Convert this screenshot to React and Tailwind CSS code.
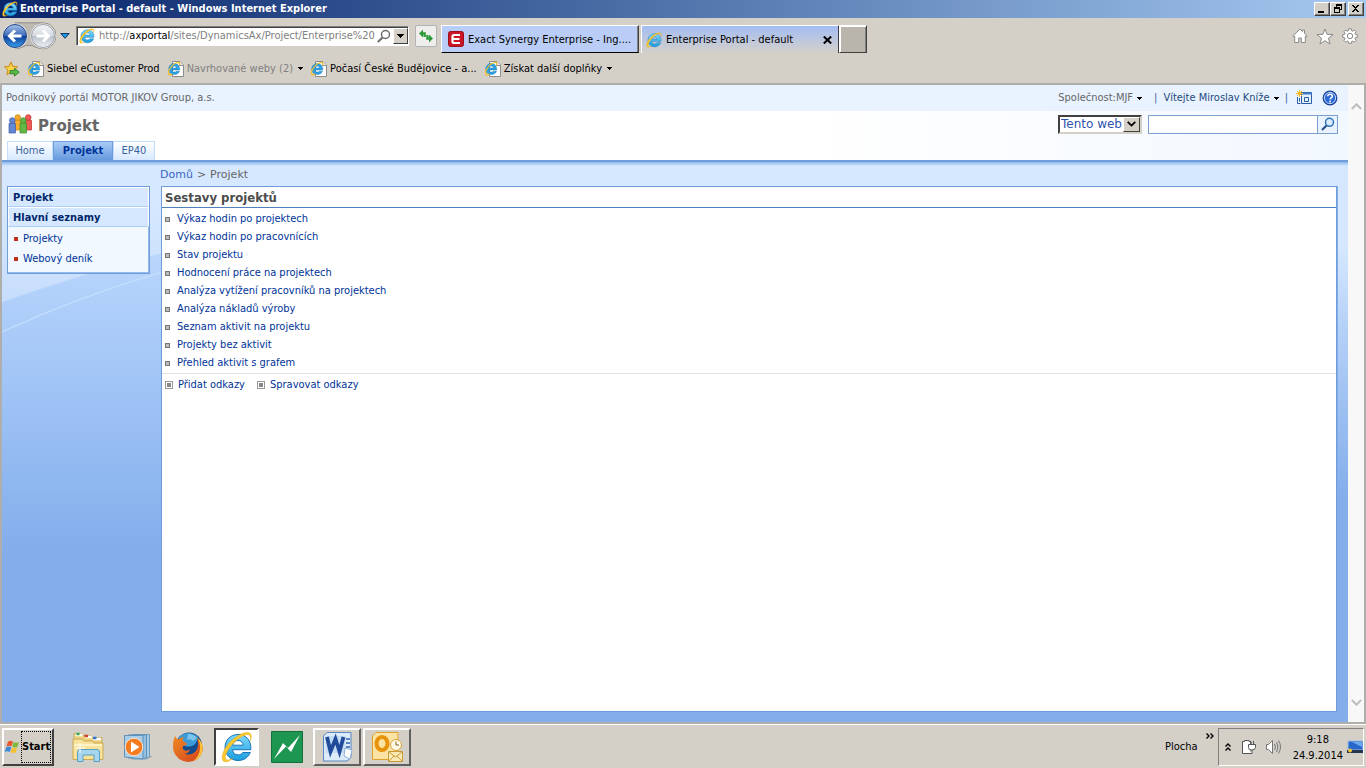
import { useState } from 'react'

const reports = [
  'Výkaz hodin po projektech',
  'Výkaz hodin po pracovnících',
  'Stav projektu',
  'Hodnocení práce na projektech',
  'Analýza vytížení pracovníků na projektech',
  'Analýza nákladů výroby',
  'Seznam aktivit na projektu',
  'Projekty bez aktivit',
  'Přehled aktivit s grafem'
]

const favorites = [
  { name: 'Siebel eCustomer Prod' },
  { name: 'Navrhované weby (2)', muted: true, menu: true },
  { name: 'Počasí České Budějovice - a...' },
  { name: 'Získat další doplňky', menu: true }
]

function Caret({ className = '' }) {
  return (
    <svg viewBox="0 0 5 3" className={`h-[3px] w-[5px] shrink-0 ${className}`} shapeRendering="crispEdges" fill="currentColor">
      <path d="M0 0h5v1H4v1H3v1H2V2H1V1H0z" />
    </svg>
  )
}

function IeLogo({ className = 'size-4' }) {
  return (
    <svg viewBox="0 0 32 32" className={`shrink-0 ${className}`}>
      <defs>
        <linearGradient id="ieBlue" x1="0" y1="0" x2="0" y2="1">
          <stop offset="0" stopColor="#7fd8fb" />
          <stop offset="1" stopColor="#1c9de0" />
        </linearGradient>
      </defs>
      <path d="M17 3.500C9.500 3.500 4 9 4 16.300S9.500 29.500 17 29.500c5.800 0 10.400-3 12.300-8h-7.600c-1 1.600-2.500 2.400-4.600 2.400-3.200 0-5.300-2-5.500-5.200h18.200C30.600 10 25.500 3.500 17 3.500zm-5.400 10.700c.6-2.900 2.500-4.700 5.400-4.700s4.900 1.800 5.300 4.700z" fill="url(#ieBlue)" stroke="#1a76b8" strokeWidth="1" />
      <path d="M29.500 9.500C31.300 4.500 30 1.200 25.800 1.400 20 1.700 10.500 8 5.300 15.700 1 22 0 28.600 2.800 30.300c2.300 1.300 6-.5 8.900-2.600-3.400 1.400-6.200 1.800-7 .3C3.600 25.500 5.500 21 8.700 16.500 14 9.200 22.500 3.500 26.800 3.500c2.300 0 3 2.300 2.700 6z" fill="#fbc92a" stroke="#e2a516" strokeWidth=".5" />
    </svg>
  )
}

function IePage() {
  return (
    <svg viewBox="0 0 16 16" className="size-4 shrink-0">
      <path d="M4.500.5h7.500l3.500 3.500v11.500h-11z" fill="#fdfdfd" stroke="#8c8c8c" />
      <path d="M11.500.5v4h4" fill="#eee" stroke="#8c8c8c" />
      <path d="M6.300 2.500C3 2.500.7 4.900.7 8s2.300 5.500 5.600 5.500c2.500 0 4.400-1.200 5.200-3.300H8.200c-.4.600-1 .9-1.800.9-1.300 0-2.200-.8-2.300-2.100h7.600c.3-3.800-1.900-6.500-5.400-6.500zM4.200 7c.2-1.100 1-1.900 2.200-1.900s1.900.8 2 1.900z" fill="#2da1e0" stroke="#1673b5" strokeWidth=".4" />
      <path d="M11.600 4.200c.6-1.800 0-3-1.500-2.700C7.300 2 3.400 5 1.600 8.300.3 10.900.1 13.100 1.300 13.700c.8.300 2-.1 3-.7" fill="none" stroke="#f4be22" strokeWidth="1.200" />
    </svg>
  )
}

function TitleBar() {
  const btn = 'flex h-3.5 w-4 items-center justify-center border border-t-white border-l-white border-r-[#404040] border-b-[#404040] bg-[#d4d0c8] shadow-[inset_-1px_-1px_0_#808080]'
  return (
    <header className="flex h-[18px] shrink-0 items-center bg-linear-to-r from-[#0a246a] to-[#a6caf0] px-0.5 text-[11px] font-bold text-white">
      <IeLogo />
      <h1 className="ml-0.5 flex-1 whitespace-nowrap">Enterprise Portal - default - Windows Internet Explorer</h1>
      <div className="flex">
        <button aria-label="Minimize" className={btn}>
          <svg viewBox="0 0 10 10" className="size-2.5" shapeRendering="crispEdges"><path d="M1 7h6v2H1z" /></svg>
        </button>
        <button aria-label="Restore" className={btn}>
          <svg viewBox="0 0 10 10" className="size-2.5" shapeRendering="crispEdges"><path d="M3 0h6v6H7V5h1V2H4v1H3zM1 3h6v6H1zM2 5v3h4V5z" fillRule="evenodd" /></svg>
        </button>
        <button aria-label="Close" className={`ml-0.5 ${btn}`}>
          <svg viewBox="0 0 10 10" className="size-2.5" shapeRendering="crispEdges"><path d="M1 1h2v1h1v1h1V2h1V1h2v1H7v1H6v1H5v1h1v1h1v1h1v1H6V7H5V6H4v1H3v1H1V7h1V6h1V5h1V4H3V3H2V2H1z" /></svg>
        </button>
      </div>
    </header>
  )
}

function NavButtons() {
  return (
    <div className="flex items-center">
      <svg viewBox="0 0 56 28" className="h-7 w-14">
        <defs>
          <linearGradient id="back" x1="0" y1="0" x2="0" y2="1">
            <stop offset="0" stopColor="#a9c4ec" />
            <stop offset=".48" stopColor="#3c69b8" />
            <stop offset=".52" stopColor="#0f3f9a" />
            <stop offset="1" stopColor="#3aa0ee" />
          </linearGradient>
          <linearGradient id="forward" x1="0" y1="0" x2="0" y2="1">
            <stop offset="0" stopColor="#f4f6f8" />
            <stop offset=".5" stopColor="#d3d8df" />
            <stop offset=".52" stopColor="#b9c1cb" />
            <stop offset="1" stopColor="#eef2f6" />
          </linearGradient>
        </defs>
        <path d="M15 .8h28a13 13 0 0 1 0 26c-6 0-9-3.500-14-3.500s-8 3.500-14 3.500z" fill="#bdbab4" stroke="#8f8d89" />
        <circle cx="15" cy="14" r="12.500" fill="#e8eef8" />
        <circle cx="15" cy="14" r="11.500" fill="url(#back)" stroke="#27457f" />
        <circle cx="43" cy="14" r="12.500" fill="#f0f0f0" />
        <circle cx="43" cy="14" r="11.500" fill="url(#forward)" stroke="#9aa0a8" />
        <path d="M21.500 14H10m5-5.500L9.500 14l5.500 5.500" fill="none" stroke="#fff" strokeWidth="3" />
        <path d="M36.500 14H48m-5-5.500 5.500 5.500-5.500 5.500" fill="none" stroke="#fff" strokeWidth="3" />
      </svg>
      <button aria-label="Recent pages" className="ml-1">
        <svg viewBox="0 0 10 6" className="h-1.5 w-2.5"><path d="M.8.500h8.400L5 5.300z" fill="#2196e0" stroke="#12366b" /></svg>
      </button>
    </div>
  )
}

function BrowserBar() {
  return (
    <div className="flex h-9 shrink-0 items-center pr-2 text-[11px]">
      <NavButtons />
      <div className="ml-1.5 flex h-5 w-[333px] items-center border border-t-[#808080] border-l-[#808080] border-r-white border-b-white bg-white pl-0.5 shadow-[inset_1px_1px_0_#404040]">
        <IeLogo />
        <div className="ml-1 flex-1 pt-px whitespace-nowrap text-[#808080]">
          http://<span className="text-black">axportal</span>/sites/DynamicsAx/Project/Enterprise%20
        </div>
        <button aria-label="Search">
          <svg viewBox="0 0 14 14" className="size-3.5" fill="none" stroke="#6d6d6d"><circle cx="8.500" cy="5.500" r="4" strokeWidth="1.500" /><path d="M5.500 8.500.8 13" strokeWidth="2" /></svg>
        </button>
        <button aria-label="Address list" className="ml-0.5 flex h-4 w-[15px] items-center justify-center border border-t-white border-l-white border-r-[#404040] border-b-[#404040] bg-[#d4d0c8]">
          <svg viewBox="0 0 7 4" className="h-1 w-[7px]" shapeRendering="crispEdges"><path d="M0 0h7v1H6v1H5v1H4v1H3V3H2V2H1V1H0z" /></svg>
        </button>
      </div>
      <button aria-label="Refresh" className="ml-1.5 flex h-[22px] w-[22px] items-center justify-center rounded-xs border border-[#b4b4b4] bg-[#eeeeec]">
        <svg viewBox="0 0 16 16" className="size-4" fill="#2f9a3a">
          <path d="M1 5.500 5 1.500v2.700h2.800V9H5.500V6.800H5v2.700z" />
          <path d="M15 10.500l-4 4v-2.700H8.200V7h2.300v2.200h.5V6.500z" />
        </svg>
      </button>
      <nav className="mt-1.5 ml-1 flex h-7 items-stretch text-black">
        <button className="flex w-[198px] items-center border border-t-white border-l-white border-r-[#404040] border-b-black bg-[#b9cdf6] pl-1.5 shadow-[inset_-1px_0_0_#808080]">
          <svg viewBox="0 0 16 16" className="size-4 shrink-0"><rect x=".5" y=".5" width="15" height="15" rx="2" fill="#cb1526" stroke="#9d0d1c" /><path d="M12 4H6q-1.500 0-1.500 1.500v5Q4.500 12 6 12h6M5 8h6.500" fill="none" stroke="#fff" strokeWidth="2.200" /></svg>
          <span className="ml-1 pt-0.5 whitespace-nowrap">Exact Synergy Enterprise - Ing....</span>
        </button>
        <button className="ml-0.5 flex w-[198px] items-center border-t border-r border-l border-t-white border-l-white border-r-[#404040] bg-linear-to-b from-[#a4bdf3] to-[#d4d0c8] pr-1.5 pl-1">
          <IeLogo />
          <span className="ml-1 flex-1 pt-0.5 text-left whitespace-nowrap">Enterprise Portal - default</span>
          <svg viewBox="0 0 9 8" className="h-2 w-[9px]" fill="none" stroke="#000" strokeWidth="2"><path d="m.8.500 7.400 7M8.200.5l-7.400 7" /></svg>
        </button>
        <button aria-label="New tab" className="w-[28px] border border-t-white border-l-white border-r-[#404040] border-b-[#404040] bg-[#b9b5ad] shadow-[inset_1px_1px_0_#fff,inset_-1px_0_0_#808080]" />
      </nav>
      <div className="ml-auto flex items-center gap-2">
        <button aria-label="Home">
          <svg viewBox="0 0 16 16" className="size-4" fill="#fff" stroke="#8a8a8a"><path d="M8 1 .8 8l1 1 .9-.8v6.300h4V10h2.600v4.500h4V8.200l.9.800 1-1-2.700-2.600V2h-2v1.500z" /></svg>
        </button>
        <button aria-label="Favorites">
          <svg viewBox="0 0 18 17" className="h-[17px] w-[18px]" fill="#fff" stroke="#8a8a8a"><path d="m9 .9 2.100 5.500 6 .2-4.700 3.700 1.700 5.700L9 12.700 3.900 16l1.700-5.700L.9 6.600l6-.2z" /></svg>
        </button>
        <button aria-label="Tools">
          <svg viewBox="0 0 16 16" className="size-4" fill="#fff" stroke="#8a8a8a"><path d="M6.700.8h2.600l.3 1.900 1.200.5 1.600-1.200 1.800 1.800L13 5.400l.5 1.100 1.800.3v2.500l-1.800.3-.5 1.200 1.100 1.600-1.800 1.800-1.600-1.100-1.100.5-.3 1.700H6.700l-.3-1.700-1.200-.5-1.500 1.100-1.800-1.800L3 10.800l-.5-1.200-1.800-.3V6.800l1.800-.3L3 5.400 1.900 3.800 3.700 2l1.500 1.200 1.200-.5z" /><circle cx="8" cy="8" r="2.700" /></svg>
        </button>
      </div>
    </div>
  )
}

function FavoritesBar() {
  return (
    <div className="flex h-[29px] shrink-0 items-center pl-1 text-[11px]">
      <button aria-label="Add to favorites">
        <svg viewBox="0 0 16 16" className="size-4"><path d="m7 .9 1.900 4.500 4.700.4L10 9l1 4.700-4-2.500-4.200 2.500L4 9 .5 5.800l4.600-.4z" fill="#fbd34b" stroke="#c98a12" /><path d="M6 9.500h4.500V7.300l4.800 3.900-4.800 3.900v-2.300H6z" fill="#58b947" stroke="#287a25" strokeWidth=".8" /></svg>
      </button>
      {favorites.map((fav) => (
        <a key={fav.name} href="#" className={`ml-2 flex items-center gap-[3px] whitespace-nowrap ${fav.muted ? 'text-[#808080]' : 'text-black'}`}>
          <IePage />
          <span className="pt-0.5">{fav.name}</span>
          {fav.menu && <Caret className="ml-0.5 text-black" />}
        </a>
      ))}
    </div>
  )
}

function PeopleIcon() {
  const people = [
    { x: 10, y: 0, c: '#f7ac2c', d: '#c87c10' },
    { x: 20.500, y: 0, c: '#f05a55', d: '#bd2828' },
    { x: 4.500, y: 3, c: '#6387d3', d: '#3c5ca8' },
    { x: 15.500, y: 3, c: '#62b846', d: '#3a8728' }
  ]
  return (
    <svg viewBox="0 0 24 20" className="h-5 w-6">
      {people.map((p) => (
        <g key={p.c} fill={p.c} stroke={p.d} strokeWidth=".7">
          <path d={`M${p.x - 3.500} ${p.y + 6.500}q3.500-2 6.500 0v9.500h-6.500z`} />
          <circle cx={p.x - 0.250} cy={p.y + 3.500} r="2.800" />
        </g>
      ))}
    </svg>
  )
}

function PortalHeader() {
  const [scope, setScope] = useState('Tento web')
  return (
    <div className="shrink-0">
      <div className="flex h-[26px] items-center bg-[#e9f2ff] pr-2.5 pl-1 text-[11px] text-[#666]">
        <span className="flex-1">Podnikový portál MOTOR JIKOV Group, a.s.</span>
        <button className="flex items-center gap-1">Společnost:MJF <Caret className="text-black" /></button>
        <span className="ml-3 text-[#3764a0]">|</span>
        <button className="ml-1.5 flex items-center gap-1 text-[#234a7d]">Vítejte Miroslav Kníže <Caret className="text-black" /></button>
        <span className="ml-1.5 text-[#3764a0]">|</span>
        <a href="#" aria-label="Site actions" className="ml-2">
          <svg viewBox="0 0 16 16" className="size-4" fill="none"><path d="M5.500 2.500h10v11h-10z" fill="#e2efff" stroke="#2c5ca6" /><path d="M6 3.500h10" stroke="#3d78cc" strokeWidth="2" /><path d="M1.500 7v6.500h3M3.500 8v3.500M8.500 7.500h4v4h-4z" stroke="#2c5ca6" /><path d="M3.500 0v7M0 3.500h7M1 1l5 5M6 1 1 6" stroke="#f5b81f" /></svg>
        </a>
        <a href="#" aria-label="Help" className="ml-2.5">
          <svg viewBox="0 0 16 16" className="size-4" fill="none"><circle cx="8" cy="8" r="6.800" fill="#2c69d2" stroke="#173f94" strokeWidth="1.200" /><circle cx="8" cy="8" r="5.600" stroke="#bcd4fa" /><path d="M5.800 6.300C5.800 3.500 10.300 3.500 10.300 6.200c0 1.600-2.200 1.600-2.200 3.300" stroke="#fff" strokeWidth="1.500" /><circle cx="8.100" cy="11.500" r=".9" fill="#fff" /></svg>
        </a>
      </div>
      <div className="flex h-[30px] items-center bg-linear-to-r from-white from-60% to-[#f2f8ff] pr-2.5 pb-1 pl-1.5">
        <PeopleIcon />
        <h2 className="ml-1.5 flex-1 pt-1 font-['DejaVu_Sans',sans-serif] text-[15px] font-bold text-[#666]">Projekt</h2>
        <select aria-label="Search scope" value={scope} onChange={(e) => setScope(e.target.value)}
          className="h-[19px] w-[84px] appearance-none border-2 border-t-[#404040] border-l-[#404040] border-r-[#d4d0c8] border-b-[#d4d0c8] bg-white pl-px font-['DejaVu_Sans',sans-serif] text-xs leading-[15px] text-[#3053b0]">
          <option>Tento web</option>
        </select>
        <span className="pointer-events-none relative -ml-[19px] flex h-[15px] w-[17px] items-center justify-center border border-t-white border-l-white border-r-[#404040] border-b-[#404040] bg-[#d4d0c8]">
          <svg viewBox="0 0 9 6" className="h-1.5 w-[9px]" fill="none" stroke="#000" strokeWidth="1.800"><path d="m.7.800 3.800 3.800L8.300.8" /></svg>
        </span>
        <input aria-label="Search" className="ml-2 h-[19px] w-[170px] border border-[#7ba0d0] bg-white px-1 text-[11px]" />
        <button aria-label="Go" className="-ml-px flex h-[19px] w-[21px] items-center justify-center border border-[#7ba0d0] bg-[#e9f2ff]">
          <svg viewBox="0 0 14 14" className="size-3.5" fill="none"><circle cx="8.500" cy="5.300" r="4" fill="#d9ecff" stroke="#2f74b9" strokeWidth="1.500" /><path d="M5.500 8.500 1 13" stroke="#24508c" strokeWidth="2.200" /></svg>
        </button>
      </div>
      <nav className="flex h-[19px] items-stretch bg-linear-to-r from-white from-60% to-[#f2f8ff] pl-[5px] text-[11px] text-[#3764a0]">
        <a href="#" className="flex w-[46px] items-center justify-center border border-b-0 border-[#c2dcff] bg-linear-to-b from-white to-[#d6e8ff]">Home</a>
        <a href="#" className="flex w-[60px] items-center justify-center border border-b-0 border-[#6f9dd9] bg-linear-to-b from-[#a9ccf7] to-[#6699dd] font-bold text-[#003399]">Projekt</a>
        <a href="#" className="flex w-[42px] items-center justify-center border border-b-0 border-[#c2dcff] bg-linear-to-b from-white to-[#d6e8ff]">EP40</a>
      </nav>
    </div>
  )
}

function Backdrop() {
  return (
    <>
      <div className="absolute inset-0 bg-linear-to-b from-[#d6e8ff] from-15% via-[#b4d0f7] via-30% to-[#83aeeb] to-60%" />
      <svg viewBox="0 0 160 562" preserveAspectRatio="xMinYMin slice" className="absolute inset-y-0 left-0 h-full w-40">
        <defs>
          <linearGradient id="sky" gradientUnits="userSpaceOnUse" x1="0" y1="0" x2="0" y2="140">
            <stop offset=".3" stopColor="#d6e8ff" />
            <stop offset="1" stopColor="#c6ddfb" />
          </linearGradient>
          <linearGradient id="hill" gradientUnits="userSpaceOnUse" x1="0" y1="90" x2="0" y2="390">
            <stop offset="0" stopColor="#b9d6fc" />
            <stop offset=".45" stopColor="#a0c4f6" />
            <stop offset="1" stopColor="#83aeeb" />
          </linearGradient>
        </defs>
        <path d="M0 0h160v562H0z" fill="url(#sky)" />
        <path d="M0 140Q80 112 160 91V562H0z" fill="url(#hill)" />
        <path d="M0 170Q75 135 160 110" fill="none" stroke="#c5dffd" strokeWidth="1.300" />
      </svg>
      <div className="absolute inset-x-0 top-0 h-1 bg-linear-to-b from-[#8fb8ef] to-[#d6e8ff]" />
    </>
  )
}

function Sidebar() {
  return (
    <aside className="w-[143px] self-start border border-[#6f9dd9] bg-[#f1f8ff] text-[11px] shadow-[inset_-1px_-1px_0_#94b9ec]">
      {['Projekt', 'Hlavní seznamy'].map((title) => (
        <h3 key={title} className="border border-x-white border-t-white border-b-[#aecff7] bg-[#d6e8ff] px-1 pt-px leading-[17px] font-bold text-[#00256b]">{title}</h3>
      ))}
      <ul className="pt-0.5 pb-1 leading-5 text-[#003399]">
        {['Projekty', 'Webový deník'].map((name) => (
          <li key={name} className="flex items-center gap-[5px] pl-1.5">
            <span className="size-1 bg-[#c03018]" />
            <a href="#">{name}</a>
          </li>
        ))}
      </ul>
    </aside>
  )
}

function Portal() {
  return (
    <div className="relative flex flex-1 flex-col border-t-2 border-[#6f9dd9]">
      <Backdrop />
      <div className="relative flex h-6 shrink-0 items-center pt-0.5 pl-[158px] font-['DejaVu_Sans',sans-serif] text-[11px] text-[#666]">
        <a href="#" className="text-[#3966bf]">Domů</a>
        <span className="px-1">&gt;</span>
        <span>Projekt</span>
      </div>
      <div className="relative flex flex-1 gap-[11px] pr-[11px] pb-2.5 pl-[5px]">
        <Sidebar />
        <main className="flex-1 border border-[#6f9dd9] bg-white text-[11px] text-[#003399] shadow-[1px_0_0_#83aeeb]">
          <h3 className="border-b border-[#4f81bd] pt-px pl-[3px] text-[13px] leading-[19px] font-bold text-[#4c4c4c]">Sestavy projektů</h3>
          <ul className="pt-0.5 pl-[3px] leading-[18px]">
            {reports.map((name) => (
              <li key={name} className="flex items-center gap-[7px]">
                <span className="size-[5px] border border-[#777] bg-[#bbb]" />
                <a href="#">{name}</a>
              </li>
            ))}
          </ul>
          <div className="mt-px flex gap-3 border-t border-[#e0e0e0] pt-px pl-[3px] leading-5">
            {['Přidat odkazy', 'Spravovat odkazy'].map((name) => (
              <a key={name} href="#" className="flex items-center gap-[5px]">
                <span className="flex size-2 items-center justify-center border border-[#999]"><span className="size-1 bg-[#888]" /></span>
                {name}
              </a>
            ))}
          </div>
        </main>
      </div>
    </div>
  )
}

function ScrollBar() {
  return (
    <div className="flex w-4 shrink-0 flex-col items-center justify-between bg-[#f8f8f8] pt-[18px] pb-4">
      <svg viewBox="0 0 11 7" className="h-[7px] w-[11px]" fill="none" stroke="#bdbdbd" strokeWidth="2"><path d="M.8 6 5.500 1.300 10.200 6" /></svg>
      <svg viewBox="0 0 11 7" className="h-[7px] w-[11px]" fill="none" stroke="#bdbdbd" strokeWidth="2"><path d="m.8 1 4.700 4.700L10.200 1" /></svg>
    </div>
  )
}

function TaskButton({ label, raised, active, children }) {
  return (
    <button
      aria-label={label}
      className={`flex h-[38px] items-center justify-center ${raised ? 'w-12 border-2 border-t-white border-l-white border-r-[#606060] border-b-[#606060]' : active ? 'w-[45px] border-2 border-t-[#404040] border-l-[#404040] border-r-white border-b-white bg-white' : 'w-12'}`}
    >
      {children}
    </button>
  )
}

function Taskbar() {
  return (
    <footer className="flex h-[44px] shrink-0 items-center border-t border-white pr-0.5 pl-0.5 text-[11px] text-black">
      <button className="flex h-[38px] w-[52px] items-center border-2 border-t-white border-l-white border-r-[#404040] border-b-[#404040] font-bold">
        <svg viewBox="0 0 18 16" className="h-4 w-[17px] shrink-0">
          <path d="M4.200 2.500Q7 .6 9.500 2.300L8 7.300Q5.300 5.700 2.600 7.500z" fill="#e8562b" />
          <path d="M10.200 2.700q2.700 1.500 5.600 0l-1.500 5q-2.800 1.500-5.500 0z" fill="#7cb83b" />
          <path d="M2.400 8.200q2.700-1.600 5.300 0l-1.500 5q-2.600-1.600-5.400.1z" fill="#3b8bd8" />
          <path d="M8.500 8.600q2.700 1.600 5.500 0l-1.500 5q-2.700 1.600-5.400 0z" fill="#f7c02c" />
        </svg>
        <span className="flex h-8 items-center border border-dotted border-black pt-0.5">Start</span>
      </button>
      <div className="ml-2.5 flex items-center gap-0.5">
        <TaskButton label="Explorer">
          <svg viewBox="0 0 32 32" className="size-8">
            <path d="M2 8V2.500h8l1 2h8l1 2h10V14H2z" fill="#ecd07c" stroke="#b8963c" strokeWidth=".6" />
            <path d="M3.500 4h7M13 6h7M21 8h8" stroke="#fff" strokeWidth="2.500" />
            <path d="M4.500 3h3" stroke="#2ea743" strokeWidth="2.500" /><path d="M12.500 5h3.500" stroke="#d3402e" strokeWidth="2.500" /><path d="M21 7h3.500" stroke="#3578d2" strokeWidth="2.500" />
            <path d="M1 8h9l2 2h8l2 2h9v16.500H1z" fill="#f7e39b" stroke="#c9a951" />
            <path d="M2 14h28" stroke="#fcf2c4" strokeWidth="2" />
            <path d="M5.500 30.500V21q0-2.500 2.500-2.500h17q2.500 0 2.500 2.500v9.500H22V24H11v6.500z" fill="#a5d6ee" stroke="#5a9fc4" />
            <path d="M8 12v10M3 17h10" stroke="#fff" strokeWidth="1" />
          </svg>
        </TaskButton>
        <TaskButton label="Media Player">
          <svg viewBox="0 0 32 32" className="size-8">
            <path d="m25 28 6-2.500-5-1z" fill="#a9a69f" />
            <path d="M10 3.500h17.500v22L24 28H10z" fill="#a7cbe4" stroke="#6d9dbf" /><path d="M6 4h18.500v23H6z" fill="#94bfdf" stroke="#6091b8" />
            <path d="M2.500 4.500H21v23.500l-18.500-2z" fill="#a9cfe9" stroke="#6091b8" />
            <circle cx="12" cy="16" r="8.800" fill="#f47b20" stroke="#fbe3cf" /><path d="m9 10.500 8.500 5.500L9 21.500z" fill="#fff" />
          </svg>
        </TaskButton>
        <TaskButton label="Firefox">
          <svg viewBox="0 0 32 32" className="size-8">
            <defs>
              <linearGradient id="fox" x1="0" y1="0" x2="1" y2="1">
                <stop offset="0" stopColor="#f08a24" />
                <stop offset="1" stopColor="#d2411c" />
              </linearGradient>
            </defs>
            <circle cx="17" cy="14.500" r="13" fill="#154a8c" />
            <path d="M7 6q9-8 19 0-1 7-6 9-7 2-13-3z" fill="#3b9bd9" />
            <path d="M16 3q6 0 9 4l-4 3-3-2-3 1z" fill="#7cc6ee" />
            <path d="M3 5q1 2.500 3 3.500 3-3 6.500-2.500-2.500 1.500-1.500 4l4 2.500q-.5 2-4 2.500-1 3 2 4.500 2 .5 5-1-1 3.500-5 4.500 6 2 10.500-2.500Q28 15 25 7q7 6 5.500 13Q27 31 16 31 5 30 1.500 20 0 11 3 5z" fill="url(#fox)" />
            <path d="M25 6q7 6 5.500 14Q28 28 21 30q6-4 7-12 .5-7-3-12z" fill="#fbc137" />
          </svg>
        </TaskButton>
        <TaskButton label="Internet Explorer" active><IeLogo className="size-8" /></TaskButton>
        <div className="ml-0.5 flex gap-0.5">
          <TaskButton label="Connection">
            <svg viewBox="0 0 32 32" className="size-8"><path d="M.5.500h31v31H.5z" fill="#1c9650" stroke="#12703a" /><path d="M29 4 20 21l-5-5.500L3 28l9-16 5 5z" fill="#fff" /></svg>
          </TaskButton>
          <TaskButton label="Word" raised>
            <svg viewBox="0 0 32 32" className="size-8">
              <path d="M6 1.500h24v25L26 30H2.500V5z" fill="#dcebfa" stroke="#5b86c2" /><path d="M25 8h4M25 12h4M25 16h4" stroke="#5b86c2" strokeWidth="2" />
              <path d="M4.500 5h20v17h-20z" fill="#c5dcf5" />
              <path d="m6 6 3.500 14.500L14.500 8l4 12.500L22.500 6" fill="none" stroke="#204b9b" strokeWidth="3.800" /><path d="m24 17 7 2-2 9-6-3z" fill="#fff" stroke="#90aed8" />
            </svg>
          </TaskButton>
          <TaskButton label="Outlook" raised>
            <svg viewBox="0 0 32 32" className="size-8">
              <path d="M5 1.500h22v27H1.500V5z" fill="#fbe3a4" stroke="#dfa22a" /><ellipse cx="11" cy="12.500" rx="5.500" ry="6.500" fill="none" stroke="#e8930c" strokeWidth="4" />
              <circle cx="25" cy="14" r="5.500" fill="#fff8e4" stroke="#dba33a" /><path d="M25 10.500V14h3" fill="none" stroke="#7c6528" />
              <path d="M17.500 20.500h14v10h-14z" fill="#fbe9b5" stroke="#c99a35" /><path d="m18 21 6.500 5 6.500-5M18 30l5-5M31 30l-5-5" fill="none" stroke="#c99a35" />
            </svg>
          </TaskButton>
        </div>
      </div>
      <span className="ml-auto pt-0.5">Plocha</span>
      <svg viewBox="0 0 8 6" className="mt-2 ml-2 h-1.5 w-2 self-start" fill="none" stroke="#000" strokeWidth="1.400"><path d="m.5.500 2.500 2.500-2.500 2.500M4.500.500 7 3 4.500 5.500" /></svg>
      <div className="ml-1 flex h-[38px] items-center border border-t-[#808080] border-l-[#808080] border-r-white border-b-white pl-1.5">
        <svg viewBox="0 0 6 8" className="h-2 w-1.5" fill="none" stroke="#000" strokeWidth="1.400"><path d="m.5 3.500 2.500-2.500 2.500 2.500M.5 7.500 3 5l2.500 2.500" /></svg>
        <svg viewBox="0 0 16 16" className="ml-2.5 size-4" fill="#fff" stroke="#555"><path d="M3.500 2.500v-1H8v1h2v12H1.500v-12z" /><path d="M7.500 5.500h7v3q0 2-3.500 2.500t-3.500-2.500zM9.500 5V2M12.500 5V2M11 11v3.500H8" /></svg>
        <svg viewBox="0 0 16 16" className="ml-2 size-4" fill="#fff" stroke="#777"><path d="M1.500 5.500h2l4-4v13l-4-4h-2z" /><path d="M9.500 5q2 3 0 6M11.500 3q3 5 0 10M13.500 1.500q4 6.500 0 13" fill="none" /></svg>
        <div className="ml-3 pt-0.5 text-center leading-4">9:18<br />24.9.2014</div>
        <svg viewBox="0 0 16 14" className="ml-1 h-3.5 w-4"><path d="M1 1h15v9H1z" fill="#2868c8" stroke="#9fc0e8" /><path d="M5 2h10v5z" fill="#6ea6ee" /><path d="M0 10h16v3H0z" fill="#26344e" /><circle cx="3" cy="10.500" r="2" fill="#f3c63a" /></svg>
      </div>
    </footer>
  )
}

export default function App() {
  return (
    <div className="flex h-screen flex-col overflow-hidden bg-[#d4d0c8] font-['DejaVu_Sans_Condensed','Noto_Sans',sans-serif]">
      <TitleBar />
      <BrowserBar />
      <FavoritesBar />
      <div className="flex min-h-0 flex-1 border-2 border-[#b0aeaa]">
        <div className="flex min-w-0 flex-1 flex-col">
          <PortalHeader />
          <Portal />
        </div>
        <ScrollBar />
      </div>
      <Taskbar />
    </div>
  )
}
